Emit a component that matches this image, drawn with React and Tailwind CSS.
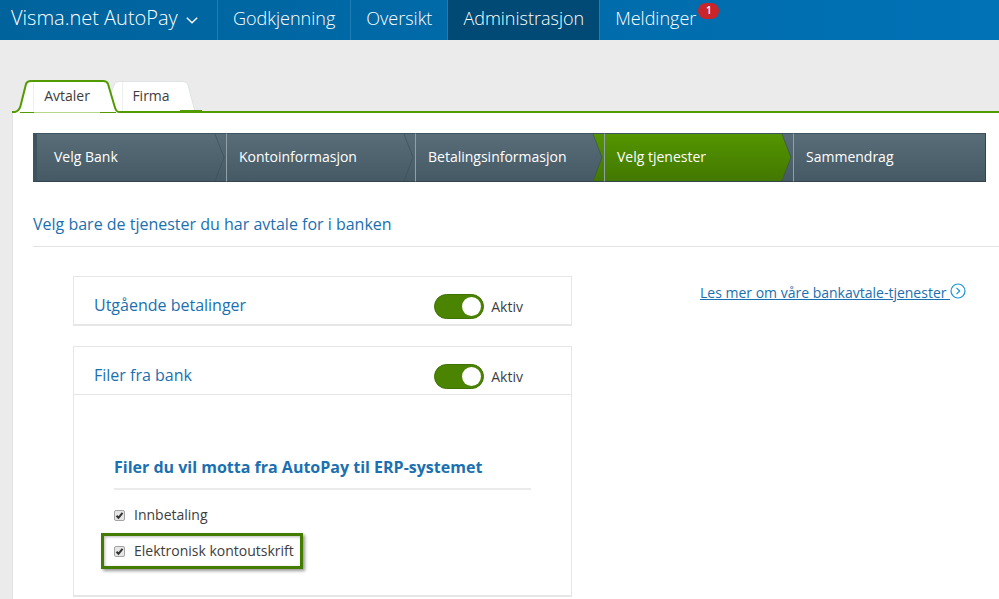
import { useState } from "react";

const navItems = [
  { label: "Godkjenning" },
  { label: "Oversikt" },
  { label: "Administrasjon", active: true },
  { label: "Meldinger", count: 1 }
];

const steps = [
  { label: "Velg Bank" },
  { label: "Kontoinformasjon" },
  { label: "Betalingsinformasjon" },
  { label: "Velg tjenester", active: true },
  { label: "Sammendrag" }
];

function TopBar() {
  return (
    <header className="flex h-10 items-stretch bg-linear-to-r from-[#00639c] to-[#0072b6] font-light text-white">
      <button type="button" className="flex w-[217px] items-center gap-2 pb-1 pl-[11px] text-xl">
        Visma.net AutoPay
        <svg className="mt-1 h-[7px] w-3" viewBox="0 0 12 7" fill="none" stroke="currentColor" strokeWidth="1.4">
          <path d="M0.8 0.8 L6 5.8 L11.2 0.8" />
        </svg>
      </button>
      <nav className="flex">
        {navItems.map((item) => (
          <a
            key={item.label}
            href="#"
            className={`relative flex items-center border-l border-[#1f7db6] px-[15px] pb-1 text-lg ${
              item.active ? "bg-[#004a75]" : ""
            }`}
          >
            {item.label}
            {item.count ? (
              <span className="absolute top-[3px] -right-2 flex h-4 w-[21px] items-center justify-center rounded-full bg-[#c9252b] text-[10px] font-semibold">
                {item.count}
              </span>
            ) : null}
          </a>
        ))}
      </nav>
    </header>
  );
}

function Tabs() {
  return (
    <div role="tablist" className="flex pl-3 pt-[39px] text-sm text-[#3d3d3d]">
      <button type="button" role="tab" aria-selected="true" className="z-10 grid h-[34px] w-[110px]">
        <svg className="col-start-1 row-start-1" width="110" height="34" viewBox="0 0 110 34" fill="none">
          <path d="M1 34 V32.500 H3 Q7 32.500 8.500 27 L14 5 Q15 2 19 2 H91 Q95 2 96 5 L102.500 27 Q104 32.500 107 32.500 V34 Z" fill="#fff" />
          <path d="M0 33 H3 Q7 32 8.500 27 L14 5 Q15 2 19 2 H91 Q95 2 96 5 L102.500 27 Q104 33 107 33 H110" stroke="#529a00" strokeWidth="2" />
          <path d="M21.500 3 V32" stroke="#eef0f0" />
          <path d="M8 33.500 H22 M88 33.500 H104" stroke="#529a00" />
          <path d="M22 33.500 H88" stroke="#b5d78a" />
        </svg>
        <span className="col-start-1 row-start-1 self-center">Avtaler</span>
      </button>
      <button type="button" role="tab" aria-selected="false" className="-ml-[11px] grid h-[34px] w-[80px]">
        <svg className="col-start-1 row-start-1 overflow-visible" width="80" height="34" viewBox="0 0 80 34" fill="none">
          <path d="M-7 32.500 L3 6 Q4 2.500 8 2.500 H72 Q76 2.500 77 6 L84 32.500" fill="#fff" stroke="#dfe3e5" />
          <path d="M11.500 3 V32" stroke="#eef0f0" />
          <path d="M69 31.500 H91" stroke="#529a00" />
        </svg>
        <span className="col-start-1 row-start-1 self-center">Firma</span>
      </button>
    </div>
  );
}

function Steps() {
  return (
    <ol className="mr-[13px] flex h-[49px] text-sm text-white">
      {steps.map((step, i) => {
        const next = steps[i + 1];
        return (
          <li
            key={step.label}
            aria-current={step.active ? "step" : undefined}
            className={`min-w-0 border-y border-t-[#405361] border-b-[#33444f] bg-linear-to-b ${
              step.active ? "from-[#549500] to-[#437800]" : "from-[#596d79] to-[#465a66]"
            } ${
              i === 0
                ? "flex-[189_1_0%] border-l-4 border-l-[#3e5360]"
                : next
                  ? "flex-[188_1_0%] border-l border-l-[#8fa0a9]"
                  : "flex-[191_1_0%] border-x border-l-[#8fa0a9] border-r-[#33444f]"
            }`}
          >
            <div className="flex h-full justify-between">
              <span className={`self-center pb-[2px] ${i === 0 ? "pl-[17px]" : "pl-3"}`}>{step.label}</span>
              {next ? (
                <svg className="h-full w-3 shrink-0" viewBox="0 0 12 47" preserveAspectRatio="none" fill="none">
                  {step.active || next.active ? (
                    <>
                      <linearGradient id={`next-${i}`} x1="0" y1="0" x2="0" y2="1">
                        <stop stopColor={next.active ? "#549500" : "#596d79"} />
                        <stop offset="1" stopColor={next.active ? "#437800" : "#465a66"} />
                      </linearGradient>
                      <path d="M1 0 H12 V47 H1 L10 23.500 Z" fill={`url(#next-${i})`} />
                    </>
                  ) : null}
                  <path d="M1 0 L10 23.500 L1 47" stroke="#3c505c" strokeOpacity="0.700" />
                </svg>
              ) : null}
            </div>
          </li>
        );
      })}
    </ol>
  );
}

function CardHeader({ title, id }) {
  const [on, setOn] = useState(true);
  return (
    <div className="flex h-[47px] items-center pl-5 pr-12">
      <h2 id={id} className="flex-1 pt-2 text-base text-[#1a70b0]">{title}</h2>
      <label className="flex items-center gap-[7px] pt-3 text-sm text-[#3d3d3d]">
        <input
          type="checkbox"
          role="switch"
          aria-describedby={id}
          checked={on}
          onChange={() => setOn(!on)}
          className="h-[25px] w-[50px] appearance-none rounded-full border border-[#3f7200] bg-gray-400 p-[2px] before:block before:size-[19px] before:rounded-full before:bg-white checked:bg-[#4b8400] checked:before:ml-auto"
        />
        Aktiv
      </label>
    </div>
  );
}

function CheckRow({ label, highlighted }) {
  const [checked, setChecked] = useState(true);
  return (
    <label
      className={`-ml-[13px] flex h-9 w-fit items-center gap-[9px] border-[3px] pl-[10px] pr-[6px] text-sm text-[#3d3d3d] ${
        highlighted ? "border-[#437c00] shadow-[2px_2px_3px_#999,inset_1px_1px_3px_#bbb]" : "border-transparent"
      }`}
    >
      <span className="grid size-[11px]">
        <input
          type="checkbox"
          checked={checked}
          onChange={() => setChecked(!checked)}
          className="col-start-1 row-start-1 size-[11px] appearance-none rounded-[2px] border border-[#a3a3a3] bg-[#e6e6e6]"
        />
        {checked ? (
          <svg className="pointer-events-none col-start-1 row-start-1" width="11" height="11" viewBox="0 0 11 11" fill="none">
            <path d="M2.500 5.800 L4.500 7.800 L8.500 2.800" stroke="#333" strokeWidth="2" />
          </svg>
        ) : null}
      </span>
      {label}
    </label>
  );
}

export default function App() {
  return (
    <div className="flex min-h-screen flex-col bg-[#ebebeb] font-['Open_Sans',sans-serif]">
      <TopBar />
      <Tabs />
      <main className="-mt-[2px] ml-3 flex-1 border-l border-t-2 border-l-[#e2e2e2] border-t-[#529a00] bg-white pl-5 pt-5">
        <Steps />
        <h1 className="border-b border-[#e2e2e2] pb-[10px] pt-[30px] text-base text-[#1a70b0]">
          Velg bare de tjenester du har avtale for i banken
        </h1>
        <div className="flex gap-32 pl-10 pt-[29px]">
          <div className="flex w-full max-w-[499px] flex-col gap-5">
            <section className="border border-b-2 border-[#e6e6e6]">
              <CardHeader id="outgoing" title="Utgående betalinger" />
            </section>
            <section className="border border-b-2 border-[#e6e6e6]">
              <CardHeader id="incoming" title="Filer fra bank" />
              <div className="border-t border-[#e6e6e6] px-10 pb-[26px] pt-[60px]">
                <h3 className="border-b-2 border-[#ebebeb] pb-[9px] text-base font-bold text-[#1a70b0]">
                  Filer du vil motta fra AutoPay til ERP-systemet
                </h3>
                <div className="pt-[7px]">
                  <CheckRow label="Innbetaling" />
                  <CheckRow label="Elektronisk kontoutskrift" highlighted />
                </div>
              </div>
            </section>
          </div>
          <a href="#" className="flex items-start pt-[7px] text-sm whitespace-nowrap text-[#1a70b0]">
            <span className="whitespace-pre underline">Les mer om våre bankavtale-tjenester </span>
            <svg className="size-4" viewBox="0 0 16 16" fill="none" stroke="#1a93dc" strokeWidth="1.2">
              <circle cx="8" cy="8" r="7" />
              <path d="M6.500 4.800 L9.700 8 L6.500 11.200" />
            </svg>
          </a>
        </div>
      </main>
    </div>
  );
}
